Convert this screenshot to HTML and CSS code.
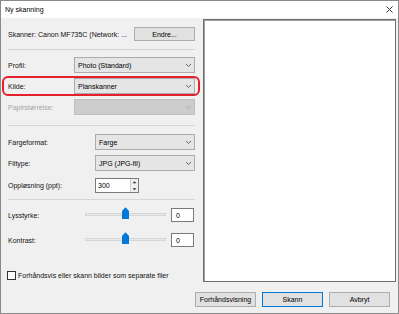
FILE: index.html
```html
<!DOCTYPE html>
<html lang="no">
<head>
  <meta charset="UTF-8">
  <title>Ny skanning</title>
  <link rel="stylesheet" href="styles.css">
</head>
<body>
  <div class="window">
    <div class="titlebar">
      <span class="title">Ny skanning</span>
      <svg class="close" width="7" height="7" viewBox="0 0 7 7">
        <path d="M0.5 0.5 L6.5 6.5 M6.5 0.5 L0.5 6.5" stroke="#333" stroke-width="1"/>
      </svg>
    </div>

    <div class="main">
      <div class="left">
        <div class="scanner-row">
          <span class="scanner-name">Skanner: Canon MF735C (Network: ...</span>
          <div class="btn endre">Endre...</div>
        </div>
        <div class="sep"></div>

        <div class="row first">
          <span class="lbl">Profil:</span>
          <div class="select">Photo (Standard)<svg class="chev" width="5" height="3" viewBox="0 0 5 3"><path d="M0 0 L2.5 2.5 L5 0" fill="none" stroke="#666"/></svg></div>
        </div>
        <div class="row marked">
          <span class="lbl">Kilde:</span>
          <div class="select">Planskanner<svg class="chev" width="5" height="3" viewBox="0 0 5 3"><path d="M0 0 L2.5 2.5 L5 0" fill="none" stroke="#666"/></svg></div>
        </div>
        <div class="row">
          <span class="lbl disabled">Papirstørrelse:</span>
          <div class="select off"><svg class="chev" width="5" height="3" viewBox="0 0 5 3"><path d="M0 0 L2.5 2.5 L5 0" fill="none" stroke="#aaa"/></svg></div>
        </div>
        <div class="sep second"></div>

        <div class="row first wide">
          <span class="lbl">Fargeformat:</span>
          <div class="select">Farge<svg class="chev" width="5" height="3" viewBox="0 0 5 3"><path d="M0 0 L2.5 2.5 L5 0" fill="none" stroke="#666"/></svg></div>
        </div>
        <div class="row wide">
          <span class="lbl">Filtype:</span>
          <div class="select">JPG (JPG-fil)<svg class="chev" width="5" height="3" viewBox="0 0 5 3"><path d="M0 0 L2.5 2.5 L5 0" fill="none" stroke="#666"/></svg></div>
        </div>
        <div class="row wide spin-row">
          <span class="lbl">Oppløsning (ppt):</span>
          <div class="spin">
            <div class="spin-val">300</div>
            <div class="spin-btns">
              <svg width="7" height="6" viewBox="0 0 7 6"><path d="M1.5 4 L3.5 2 L5.5 4 Z" fill="#333"/></svg>
              <svg width="7" height="6" viewBox="0 0 7 6"><path d="M1.5 2 L3.5 4 L5.5 2 Z" fill="#333"/></svg>
            </div>
          </div>
        </div>
        <div class="sep third"></div>

        <div class="slider-row first">
          <span class="lbl">Lysstyrke:</span>
          <div class="track">
            <svg class="thumb" width="7" height="12" viewBox="0 0 7 12"><path d="M0 12 V4 L3 0.8 Q3.5 0.3 4 0.8 L7 4 V12 Z" fill="#0078d7"/></svg>
          </div>
          <div class="num">0</div>
        </div>
        <div class="slider-row">
          <span class="lbl">Kontrast:</span>
          <div class="track">
            <svg class="thumb" width="7" height="12" viewBox="0 0 7 12"><path d="M0 12 V4 L3 0.8 Q3.5 0.3 4 0.8 L7 4 V12 Z" fill="#0078d7"/></svg>
          </div>
          <div class="num">0</div>
        </div>

        <div class="check-row">
          <span class="box"></span>
          <span>Forhåndsvis eller skann bilder som separate filer</span>
        </div>
      </div>

      <div class="right">
        <div class="preview"></div>
      </div>
    </div>

    <div class="actions">
      <div class="btn">Forhåndsvisning</div>
      <div class="btn default">Skann</div>
      <div class="btn">Avbryt</div>
    </div>
  </div>
</body>
</html>
```

FILE: styles.css
```css
* { box-sizing: border-box; }
html, body {
  margin: 0;
  padding: 0;
  background: #ffffff;
}
body {
  font-family: 'Liberation Sans', Arial, sans-serif;
  font-size: 7px;
  color: #111;
}
.window {
  width: 399px;
  height: 314px;
  border: 1px solid #8a8a8a;
  background: #f0f0f0;
  display: flex;
  flex-direction: column;
}
.titlebar {
  height: 17px;
  background: #ffffff;
  display: flex;
  align-items: center;
  justify-content: space-between;
  padding: 0 5px 0 4px;
  flex-shrink: 0;
}
.title {
  font-size: 7px;
  color: #000;
}
.close {
  display: block;
}
.main {
  display: flex;
  padding-top: 1px;
}
.left {
  width: 200px;
  padding: 8px 6px 0 7px;
}
.right {
  margin-left: 2px;
}
.preview {
  width: 193px;
  height: 263px;
  background: #ffffff;
  border: 1px solid #6e6e6e;
  box-shadow: inset 1px 1px 0 #a0a0a0;
}
.scanner-row {
  display: flex;
  align-items: center;
  justify-content: space-between;
  height: 14px;
}
.btn {
  height: 15px;
  width: 61px;
  background: #e1e1e1;
  border: 1px solid #adadad;
  display: flex;
  align-items: center;
  justify-content: center;
  color: #000;
}
.btn.endre {
  height: 14px;
}
.btn.default {
  border-color: #0078d7;
}
.sep {
  height: 1px;
  background: #d5d5d5;
  margin-top: 8px;
}
.sep.second {
  margin-top: 10px;
}
.sep.third {
  margin-top: 6px;
}
.row {
  display: flex;
  align-items: center;
  height: 16px;
  margin-top: 5px;
}
.row.first {
  margin-top: 7px;
}
.sep.second + .row.first {
  margin-top: 8px;
}
.lbl {
  width: 66px;
  flex-shrink: 0;
}
.row.wide .lbl {
  width: 87px;
}
.lbl.disabled {
  color: #a6a6a6;
}
.select {
  flex: 1;
  height: 16px;
  background: #e5e5e5;
  border: 1px solid #acacac;
  display: flex;
  align-items: center;
  justify-content: space-between;
  padding: 0 3px 0 3px;
  color: #000;
}
.select.off {
  background: #cccccc;
  border-color: #bfbfbf;
  justify-content: flex-end;
}
.chev {
  display: block;
}
.marked {
  position: relative;
}
.marked::before {
  content: "";
  position: absolute;
  top: -2px;
  bottom: -2px;
  left: -6px;
  right: -5px;
  border: 2px solid #e3202b;
  border-radius: 6px;
}
.spin-row {
  margin-top: 7px;
  height: 15px;
}
.spin {
  display: flex;
  height: 15px;
  width: 44px;
  border: 1px solid #7a7a7a;
  background: #ffffff;
}
.spin-val {
  flex: 1;
  padding-left: 2px;
  display: flex;
  align-items: center;
  color: #000;
}
.spin-btns {
  width: 8px;
  display: flex;
  flex-direction: column;
  background: #f0f0f0;
  border-left: 1px solid #cfcfcf;
}
.spin-btns svg {
  display: block;
  width: 7px;
  height: 6.5px;
}
.slider-row {
  display: flex;
  align-items: center;
  height: 14px;
  margin-top: 11px;
}
.slider-row.first {
  margin-top: 8px;
}
.slider-row .lbl {
  width: 77px;
}
.track {
  position: relative;
  width: 81px;
  height: 3px;
  background: #e7eaea;
  border: 1px solid #d6d6d6;
  margin-top: -2px;
}
.thumb {
  position: absolute;
  left: calc(50% - 4px);
  top: -7px;
}
.num {
  margin-left: 5px;
  width: 23px;
  height: 14px;
  background: #ffffff;
  border: 1px solid #7a7a7a;
  padding-left: 4px;
  display: flex;
  align-items: center;
  color: #000;
}
.check-row {
  display: flex;
  align-items: center;
  margin-top: 24px;
  margin-left: -1px;
}
.box {
  width: 9px;
  height: 9px;
  border: 1px solid #333;
  background: #ffffff;
  margin-right: 2px;
}
.actions {
  display: flex;
  justify-content: flex-end;
  gap: 6px;
  padding: 10px 8px 0 0;
}
```
